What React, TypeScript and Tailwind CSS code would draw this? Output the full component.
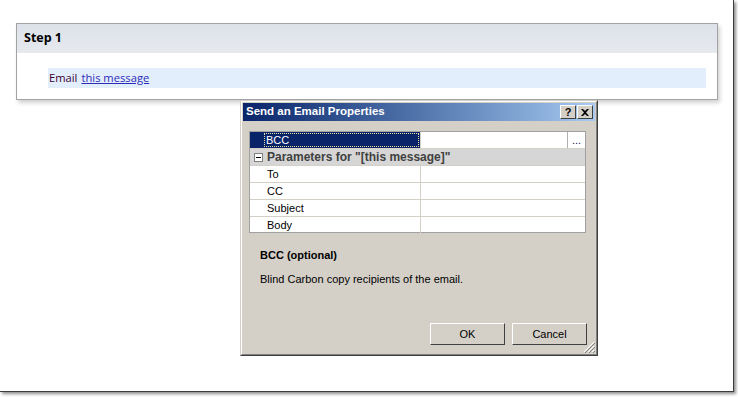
import React from 'react';

const rows = ['To', 'CC', 'Subject', 'Body'];

function TitleButton({ children }: { children: React.ReactNode }) {
  return (
    <div className="w-[16px] h-[14px] bg-[#d4d0c8] border border-t-white border-l-white border-r-[#404040] border-b-[#404040] flex items-center justify-center text-[11px] font-bold text-black leading-none">
      {children}
    </div>
  );
}

function DialogButton({ label }: { label: string }) {
  return (
    <div className="h-[22px] bg-[#d4d0c8] border border-t-white border-l-white border-r-[#404040] border-b-[#404040] flex items-center justify-center text-[11px] text-black">
      {label}
    </div>
  );
}

export default function App() {
  return (
    <div className="w-[738px] h-[397px] bg-white overflow-hidden">
      <div className="w-[734px] h-[392px] bg-white border-r border-b border-[#3c3c3c] shadow-[2px_2px_3px_rgba(0,0,0,0.45)] flex flex-col">
        {/* Step card */}
        <div className="ml-[16px] mt-[23px] w-[702px] h-[77px] border border-[#a3a3a3] bg-white shadow-[2px_3px_4px_rgba(0,0,0,0.18)] flex flex-col" style={{ fontFamily: '"Open Sans", "Noto Sans", sans-serif' }}>
          <div className="h-[29px] bg-gradient-to-b from-[#dde2ea] to-[#e6e9ee] flex items-center pl-[7px] text-[12.5px] font-bold text-black">
            Step 1
          </div>
          <div className="ml-[31px] mt-[15px] w-[658px] h-[20px] bg-[#e3eefc] flex items-center pl-[1px] text-[11.2px] text-[#3b0030]">
            Email<span className="ml-[4px] text-[#2b2bb8] underline">this message</span>
          </div>
        </div>

        {/* Properties dialog */}
        <div className="ml-[240px] w-[358px] h-[256px] bg-[#d4d0c8] border border-t-[#d4d0c8] border-l-[#d4d0c8] border-r-[#404040] border-b-[#404040]" style={{ fontFamily: '"Liberation Sans", Arial, sans-serif' }}>
          <div className="w-full h-full border border-t-white border-l-white border-r-[#808080] border-b-[#808080] p-[1px] flex flex-col">
            <div className="h-[18px] bg-gradient-to-r from-[#0a246a] to-[#a6caf0] flex items-center justify-between pl-[3px] pr-[2px]">
              <span className="text-[11.5px] font-bold text-white">Send an Email Properties</span>
              <div className="flex">
                <TitleButton>?</TitleButton>
                <div className="ml-[1px]">
                  <TitleButton>
                    <svg width="8" height="7" viewBox="0 0 8 7">
                      <path d="M0 0 L2 0 L4 2 L6 0 L8 0 L5 3.5 L8 7 L6 7 L4 5 L2 7 L0 7 L3 3.5 Z" fill="#000" />
                    </svg>
                  </TitleButton>
                </div>
              </div>
            </div>

            {/* Property grid */}
            <div className="ml-[6px] mt-[10px] w-[337px] h-[102px] border border-[#a0a0a0] bg-white flex flex-col text-[11px]">
              <div className="h-[17px] flex border-b border-[#d4d0c8]">
                <div className="w-[170px] bg-[#0a246a] flex items-center pl-[14px] pr-[1px] py-[1px]">
                  <div className="w-full h-full border border-dotted border-[#e8e0a0] flex items-center pl-[1px] text-white">BCC</div>
                </div>
                <div className="flex-1 border-l border-[#d4d0c8] flex justify-end">
                  <div className="w-[18px] h-full border-l border-[#b0b0b0] flex items-end justify-center pb-[2px] text-[11px] leading-none text-[#202050]">...</div>
                </div>
              </div>
              <div className="h-[17px] bg-[#d6d6d6] flex items-center border-b border-[#d4d0c8]">
                <div className="ml-[4px] w-[9px] h-[9px] border border-[#808080] bg-white flex items-center justify-center">
                  <div className="w-[5px] h-[1px] bg-black" />
                </div>
                <span className="ml-[4px] font-bold text-[12px] text-[#404040]">Parameters for "[this message]"</span>
              </div>
              {rows.map((r, i) => (
                <div key={r} className={`h-[17px] flex ${i < rows.length - 1 ? 'border-b border-[#d4d0c8]' : ''}`}>
                  <div className="w-[170px] flex items-center pl-[17px] text-black">{r}</div>
                  <div className="flex-1 border-l border-[#d4d0c8]" />
                </div>
              ))}
            </div>

            {/* Description */}
            <div className="ml-[17px] mt-[14px] text-[11px] font-bold text-black">BCC (optional)</div>
            <div className="ml-[17px] mt-[7px] text-[11px] text-black">Blind Carbon copy recipients of the email.</div>

            {/* Buttons */}
            <div className="mt-auto mb-[8px] flex justify-end gap-[7px] pr-[8px]">
              <div className="w-[75px]"><DialogButton label="OK" /></div>
              <div className="w-[75px]"><DialogButton label="Cancel" /></div>
            </div>
            <div className="h-0 relative">
              <svg className="absolute right-0 bottom-0" width="12" height="12" viewBox="0 0 12 12">
                <path d="M11 1 L1 11 M11 5 L5 11 M11 9 L9 11" stroke="#ffffff" strokeWidth="1" />
                <path d="M12 2 L2 12 M12 6 L6 12 M12 10 L10 12" stroke="#808080" strokeWidth="1" />
              </svg>
            </div>
          </div>
        </div>
      </div>
    </div>
  );
}
